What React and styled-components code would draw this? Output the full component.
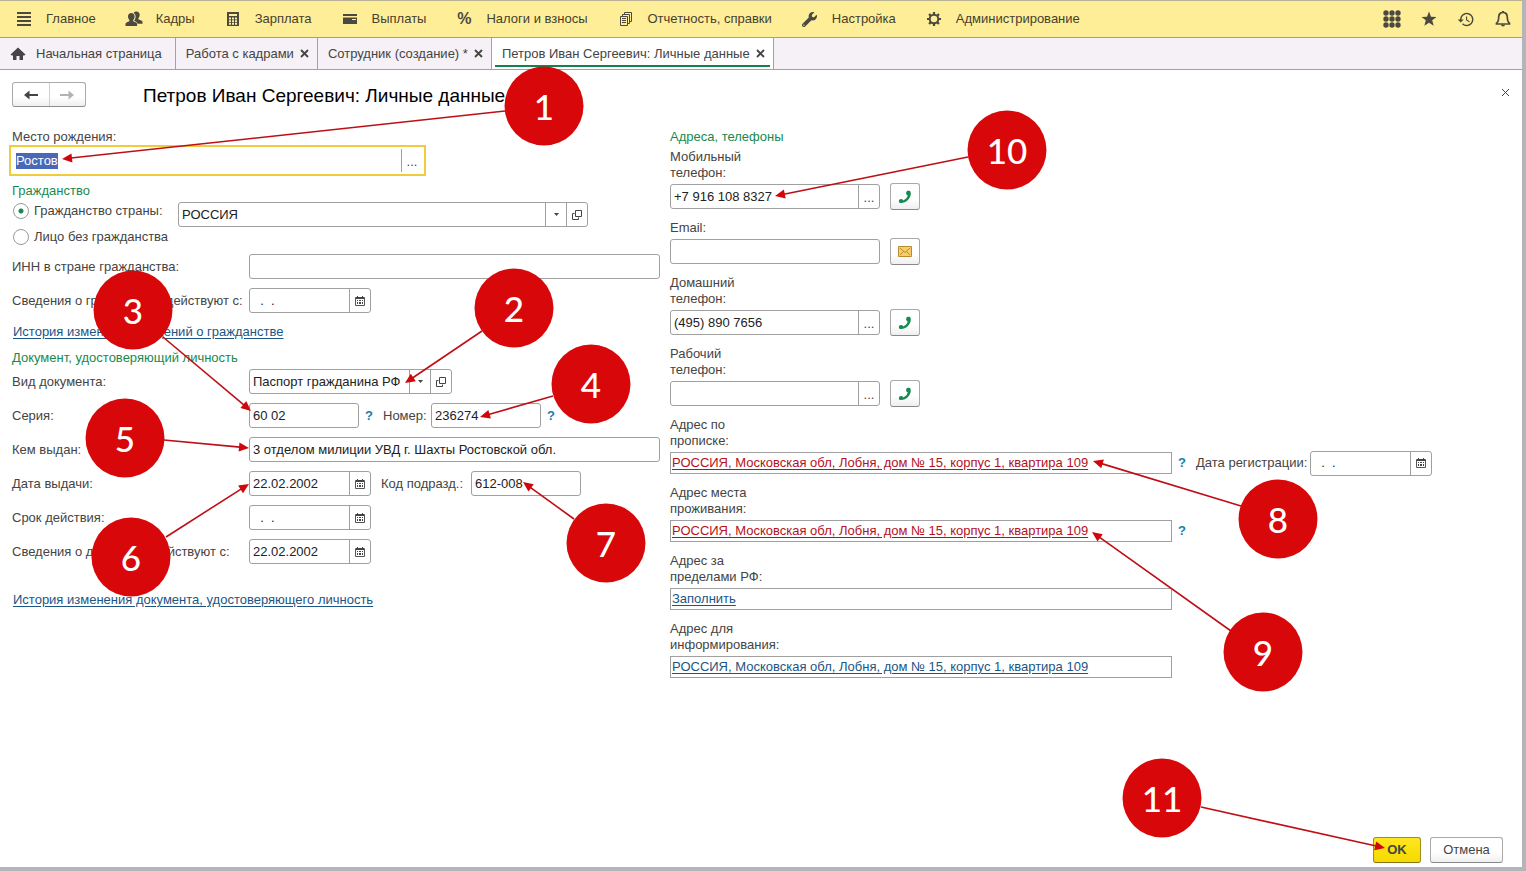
import { useEffect, useRef } from "react"
import styled, { createGlobalStyle } from "styled-components"
import { FaWrench } from "react-icons/fa"
import { MdHistory } from "react-icons/md"

const GlobalStyle = createGlobalStyle`
    * {
        box-sizing: border-box;
    }
    body {
        margin: 0;
        background-color: #b4b5b9;
    }
    body, input, select, button {
        font-family: "Liberation Sans", Arial, sans-serif;
        font-size: 13px;
        line-height: 16px;
        color: #444;
    }
`

const Window = styled.div`
    min-height: 100vh;
    display: flex;
    flex-direction: column;
    position: relative;
    border-top: 1px solid #b9b294;
    border-right: 4px solid #b4b5b9;
    border-bottom: 4px solid #b4b5b9;
    background-color: #fff;
`

const MenuBar = styled.nav`
    height: 37px;
    display: flex;
    align-items: center;
    justify-content: space-between;
    padding: 0 10px 0 16px;
    background-color: #feee98;
    border-bottom: 1px solid #b5a255;
`

const MenuList = styled.div`
    display: flex;
    align-items: center;
    gap: 30px;
`

const MenuItem = styled.a`
    display: flex;
    align-items: center;
    gap: 14px;
    color: #44422f;
    text-decoration: none;
    white-space: nowrap;
`

const IconSlot = styled.span`
    width: 16px;
    height: 16px;
    display: flex;
    align-items: center;
    justify-content: center;
    color: #4c4a40;
`

const Percent = styled.span`
    font-size: 16px;
    font-weight: bold;
`

const Tools = styled.div`
    display: flex;
    gap: 19px;
`

const ToolButton = styled.button`
    width: 18px;
    height: 20px;
    display: flex;
    align-items: center;
    justify-content: center;
    padding: 0;
    border: none;
    background: none;
    color: #4c4a40;
`

const TabBar = styled.div`
    height: 32px;
    display: flex;
    background-color: #f5f1f6;
    border-bottom: 1px solid #a3a1a6;
`

const Tab = styled.div`
    display: flex;
    align-items: center;
    gap: ${props => props.home ? "10px" : "6px"};
    padding: ${props => props.home ? "0 13px 0 10px" : "0 7px 0 10px"};
    border-right: 1px solid #a3a1a6;
    background-color: ${props => props.active ? "#fff" : "transparent"};
    position: relative;
    white-space: nowrap;

    &::after {
        content: "";
        display: ${props => props.active ? "block" : "none"};
        position: absolute;
        left: 3px;
        right: 3px;
        bottom: 2px;
        height: 2px;
        background-color: #15824e;
    }
`

const TabLink = styled.a`
    color: #444;
    text-decoration: none;
`

const CloseButton = styled.button`
    width: 10px;
    height: 20px;
    display: flex;
    align-items: center;
    justify-content: center;
    padding: 0;
    border: none;
    background: none;
`

const Content = styled.main`
    flex: 1;
    display: flex;
    flex-direction: column;
    padding: 12px 12px 4px;
`

const TitleBar = styled.header`
    display: flex;
    align-items: flex-start;
    height: 26px;
    margin-bottom: 21px;
`

const NavButtons = styled.div`
    display: flex;
    width: 74px;
    height: 25px;
    border: 1px solid #aaa;
    border-bottom-color: #8d8d8d;
    border-radius: 3px;
    background: linear-gradient(#fff 60%, #efefef);
`

const NavButton = styled.button`
    flex: 1;
    display: flex;
    align-items: center;
    justify-content: center;
    padding: 0;
    border: none;
    border-left: ${props => props.divided ? "1px solid #d0d0d0" : "none"};
    background: none;
`

const Title = styled.h1`
    flex: 1;
    margin: 0 0 0 57px;
    font-size: 19px;
    line-height: 28px;
    font-weight: normal;
    color: #000;
`

const Columns = styled.div`
    display: grid;
    grid-template-columns: 648px minmax(0, 1fr);
    column-gap: 10px;
`

const Column = styled.section`
    display: flex;
    flex-direction: column;
    min-width: 0;
`

const GroupTitle = styled.h2`
    margin: 0;
    font-size: 13px;
    line-height: 16px;
    font-weight: normal;
    color: #178a50;
`

const Rows = styled.div`
    display: flex;
    flex-direction: column;
    gap: 9px;
    margin-top: 3px;
`

const Row = styled.div`
    display: flex;
    align-items: center;
    height: 25px;
`

const Label = styled.label`
    width: ${props => props.wide ? "237px" : "auto"};
    flex-shrink: 0;
    white-space: nowrap;
`

const SideLabel = styled.label`
    width: ${props => props.width}px;
    flex-shrink: 0;
    white-space: nowrap;
`

const Field = styled.div`
    display: flex;
    align-items: stretch;
    width: ${props => props.width ? props.width + "px" : "auto"};
    flex: ${props => props.width ? "none" : "1"};
    height: 25px;
    border: 1px solid #a0a0a0;
    border-radius: 3px;
    background-color: #fff;
    overflow: hidden;
`

const FocusedField = styled.div`
    display: flex;
    width: 417px;
    height: 31px;
    margin: 0 0 7px -3px;
    padding: 2px;
    border: 2px solid #f0cc3c;
    background-color: #fff;
`

const Input = styled.input`
    flex: 1;
    width: 0;
    min-width: 0;
    padding: 0 3px;
    border: none;
    outline: none;
    background: none;
    color: #222;

    &::selection {
        background-color: #4a68b8;
        color: #fff;
    }
`

const SelectBox = styled.div`
    flex: 1;
    display: grid;
    min-width: 0;

    & > * {
        grid-area: 1 / 1;
    }
`

const Select = styled.select`
    appearance: none;
    width: 100%;
    padding: 0 21px 0 3px;
    border: none;
    outline: none;
    background: none;
    color: #222;
`

const Caret = styled.span`
    justify-self: end;
    width: 21px;
    display: flex;
    align-items: center;
    justify-content: center;
    border-left: 1px solid #a0a0a0;
    pointer-events: none;
`

const FieldButton = styled.button`
    width: 21px;
    flex-shrink: 0;
    display: flex;
    align-items: center;
    justify-content: center;
    padding: 0;
    border: none;
    border-left: 1px solid #a0a0a0;
    background: none;
`

const Dots = styled.span`
    padding-top: 2px;
    line-height: 12px;
`

const Citizenship = styled.div`
    display: flex;
    gap: 10px;
    margin: 3px 0 6px;
`

const Radios = styled.div`
    width: 156px;
    flex-shrink: 0;
    display: flex;
    flex-direction: column;
    gap: 10px;
    padding: 1px 0 0 1px;
`

const RadioLabel = styled.label`
    display: flex;
    align-items: center;
    gap: 5px;
    height: 16px;
    white-space: nowrap;
`

const Radio = styled.input`
    appearance: none;
    width: 16px;
    height: 16px;
    flex-shrink: 0;
    margin: 0;
    border: 1px solid #999;
    border-radius: 50%;
    background: #fff;

    &:checked {
        background: radial-gradient(circle, #178a50 0 2px, #fff 3px);
    }
`

const Link = styled.a`
    color: ${props => props.alert ? "#b5121b" : "#1c5584"};
    text-decoration: underline;
    text-underline-offset: 2px;
    white-space: nowrap;
`

const HistoryLink = styled(Link)`
    align-self: flex-start;
    margin: ${props => props.last ? "28px 0 0 1px" : "11px 0 10px 1px"};
`

const Help = styled.button`
    width: 8px;
    margin: 0 ${props => props.after || 0}px 0 6px;
    padding: 0;
    border: none;
    background: none;
    color: #1a7dab;
    font-weight: bold;
    text-align: center;
`

const Contacts = styled.div`
    display: flex;
    flex-direction: column;
    gap: 11px;
    margin-top: 4px;
`

const Contact = styled.div`
    display: flex;
    flex-direction: column;
    gap: 3px;
`

const ContactLabel = styled.label`
    width: 110px;
`

const ContactRow = styled.div`
    display: flex;
    align-items: center;
    height: ${props => props.address ? "22px" : "25px"};
`

const ActionButton = styled.button`
    width: 30px;
    height: 27px;
    display: flex;
    align-items: center;
    justify-content: center;
    margin-left: 10px;
    padding: 0;
    border: 1px solid #aaa;
    border-bottom-color: #888;
    border-radius: 3px;
    background: linear-gradient(#fff 60%, #efefef);
`

const AddressBox = styled.div`
    width: 502px;
    height: 22px;
    display: flex;
    align-items: center;
    padding: 0 1px;
    border: 1px solid #a0a0a0;
`

const Footer = styled.footer`
    display: flex;
    justify-content: flex-end;
    gap: 9px;
    margin-top: auto;
    padding-right: 7px;
`

const FooterButton = styled.button`
    width: ${props => props.primary ? "48px" : "73px"};
    height: 26px;
    padding: 0;
    border: 1px solid ${props => props.primary ? "#a08d20" : "#aaa"};
    border-bottom-color: ${props => props.primary ? "#857510" : "#888"};
    border-radius: 3px;
    background: ${props => props.primary ? "linear-gradient(#ffe71f, #f6d900)" : "linear-gradient(#fff 60%, #efefef)"};
    font-weight: ${props => props.primary ? "bold" : "normal"};
`

const Overlay = styled.svg`
    position: absolute;
    top: -1px;
    left: 0;
    width: 100%;
    height: 100%;
    overflow: visible;
    pointer-events: none;
    font-family: Lato, sans-serif;
    font-size: 35px;
    font-weight: 500;
`

const ListIcon = () => (
    <svg width="16" height="16" viewBox="0 0 16 16" fill="currentColor">
        <path d="M1 1h14v2H1zM1 5h14v2H1zM1 9h14v2H1zM1 13h14v2H1z" />
    </svg>
)

const PeopleIcon = () => (
    <svg width="18" height="16" viewBox="0 0 18 16" fill="currentColor" style={{ flexShrink: 0 }}>
        <path d="M11.5 0.500c2 0 3.200 1.400 3.200 3.300 0 1.500-.6 2.500-1.300 3.300v1.200l3.300 1.500c.6.3.8.8.8 1.500v1.500h-5c-.1-1.200-.8-1.800-1.800-2.300l-1.600-.8c1-1.200 1.500-2.500 1.500-4.200 0-1.600-.7-2.800-1.900-3.600.6-.9 1.600-1.400 2.800-1.400z" />
        <path d="M6.300 2c2 0 3.300 1.400 3.300 3.500 0 1.600-.6 2.700-1.400 3.500v1.300l2.900 1.300c.7.4 1 .9 1 1.700v1.700H.5v-1.700c0-.8.3-1.300 1-1.700l2.900-1.300V9C3.600 8.200 3 7.100 3 5.500 3 3.400 4.300 2 6.300 2z" />
    </svg>
)

const CalcIcon = () => (
    <svg width="14" height="16" viewBox="0 0 14 16">
        <path fill="currentColor" d="M1 1h12v14H1z" />
        <path fill="#feee98" d="M3 3h8v2H3zM3 6.500h2v2H3zM6 6.500h2v2H6zM9 6.500h2v2H9zM3 9.200h2v2H3zM6 9.200h2v2H6zM9 9.200h2v2H9zM3 12h2v1.700H3zM6 12h2v1.700H6zM9 12h2v1.700H9z" />
    </svg>
)

const WalletIcon = () => (
    <svg width="16" height="16" viewBox="0 0 16 16">
        <path fill="currentColor" d="M1 3h14v2H1zM1 6.500h14V13H1z" />
        <path fill="#feee98" d="M10 8h4v1h-4z" />
    </svg>
)

const ReportIcon = () => (
    <svg width="16" height="16" viewBox="0 0 16 16" fill="none" stroke="currentColor">
        <path d="M2.500 5.500h7v9h-7zM4.500 5V3.500h7v9H10M6.500 3V1.500h7v9H12M4 7.500h4M4 9.500h4M4 11.500h4" />
    </svg>
)

const GearIcon = () => (
    <svg width="16" height="16" viewBox="0 0 16 16" fill="none" stroke="currentColor">
        <circle cx="8" cy="8" r="4.300" strokeWidth="2" />
        <path strokeWidth="2.200" d="M8 1v2.500M8 12.500V15M1 8h2.500M12.500 8H15M3.050 3.050l1.800 1.800M11.150 11.150l1.800 1.800M3.050 12.950l1.800-1.800M11.150 4.850l1.800-1.800" />
    </svg>
)

const GridIcon = () => (
    <svg width="18" height="18" viewBox="0 0 18 18" fill="currentColor">
        {[3, 9, 15].map(y => [3, 9, 15].map(x => <circle key={x + "-" + y} cx={x} cy={y} r="2.700" />))}
    </svg>
)

const StarIcon = () => (
    <svg width="16" height="16" viewBox="0 0 16 16" fill="currentColor">
        <path d="M8 .5l2 5.200 5.500.200-4.300 3.400 1.500 5.500L8 11.700l-4.700 3.100 1.500-5.500L.5 5.900 6 5.700z" />
    </svg>
)

const BellIcon = () => (
    <svg width="16" height="18" viewBox="0 0 16 18" fill="none" stroke="currentColor" strokeWidth="1.700">
        <path d="M8 2.500c-2.800 0-4.300 2-4.300 4.500 0 3.500-.8 5.200-2.200 6.200v.8h13v-.8c-1.400-1-2.200-2.700-2.200-6.200 0-2.500-1.500-4.500-4.300-4.500z" />
        <path fill="currentColor" stroke="none" d="M7 1h2v2H7zM6 14.500h4c0 1.300-.8 2-2 2s-2-.7-2-2z" />
    </svg>
)

const HomeIcon = () => (
    <svg width="16" height="14" viewBox="0 0 16 14" fill="currentColor">
        <path d="M8 .5l7.500 7-1.200 1H13V13H9.500V9h-3v4H3V8.500H1.700L.5 7.500z" />
    </svg>
)

const CrossIcon = ({ thin }) => (
    <svg width="9" height="9" viewBox="0 0 9 9" stroke="#444" strokeWidth={thin ? 1 : 1.800}>
        <path d="M1 1l7 7M8 1l-7 7" />
    </svg>
)

const ArrowIcon = ({ forward }) => (
    <svg width="16" height="12" viewBox="0 0 16 12" fill={forward ? "#b3b3b3" : "#444"}>
        <path d={forward ? "M15 6l-5.500-4.500V5H1v2h8.500v3.500z" : "M1 6l5.500-4.500V5H15v2H6.500v3.500z"} />
    </svg>
)

const CaretIcon = () => (
    <svg width="5" height="3" viewBox="0 0 5 3" fill="#444">
        <path d="M0 0h5L2.500 3z" />
    </svg>
)

const OpenIcon = () => (
    <svg width="10" height="10" viewBox="0 0 10 10" fill="none" stroke="#444">
        <path d="M3.500.5h6v6h-6zM2.500 3.500h-2v6h6v-2" />
    </svg>
)

const CalendarIcon = () => (
    <svg width="10" height="10" viewBox="0 0 10 10">
        <path fill="none" stroke="#555" d="M.5 1.500h9v8h-9z" />
        <path fill="#444" d="M1 1h8v2H1zM2 0h1v2H2zM7 0h1v2H7zM2 4h1v1H2zM4 4h2v1H4zM7 4h1v1H7zM2 6h1v2H2zM4 6h2v2H4zM7 6h1v2H7z" />
    </svg>
)

const PhoneIcon = () => (
    <svg width="14" height="14" viewBox="0 0 14 14" fill="#178a50">
        <path d="M8.800 1.200C10 .4 12 .6 12.500 1.800c.9 2.600-.1 5.600-2.300 7.900C7.900 12 5 13.300 2.200 13 .9 12.800.4 11 1.300 9.700c1-1 2.800-.9 3.600.1l.2.700c1.200-.4 2.200-1.100 3-1.900.9-1 1.500-2.100 1.600-3.300l-.8-.4c-.9-.9-1.100-2.700-.1-3.700z" />
    </svg>
)

const MailIcon = () => (
    <svg width="14" height="11" viewBox="0 0 14 11" fill="none" stroke="#b98a30">
        <path fill="#f7cf6a" d="M.5.5h13v10H.5z" />
        <path d="M2 2l5 4.500L12 2M2 9l3.500-3.500M12 9L8.500 5.500" />
    </svg>
)

const menu = [
    { text: "Главное", icon: <ListIcon /> },
    { text: "Кадры", icon: <PeopleIcon /> },
    { text: "Зарплата", icon: <CalcIcon /> },
    { text: "Выплаты", icon: <WalletIcon /> },
    { text: "Налоги и взносы", icon: <Percent>%</Percent> },
    { text: "Отчетность, справки", icon: <ReportIcon /> },
    { text: "Настройка", icon: <FaWrench size={15} /> },
    { text: "Администрирование", icon: <GearIcon /> },
]

const tabs = ["Работа с кадрами", "Сотрудник (создание) *", "Петров Иван Сергеевич: Личные данные"]

const address = "РОССИЯ, Московская обл, Лобня, дом № 15, корпус 1, квартира 109"

// number, circle centre, arrow start, arrow tip
const callouts = [
    [1, 544, 106, 505, 111, 62, 159],
    [2, 514, 308, 482, 331, 405, 383],
    [3, 133, 310, 163, 337, 251, 411],
    [4, 591, 384, 553, 396, 480, 417],
    [5, 125, 438, 164, 440, 249, 448],
    [6, 131, 557, 166, 537, 249, 484],
    [7, 606, 543, 574, 519, 523, 482],
    [8, 1278, 519, 1241, 506, 1093, 461],
    [9, 1263, 652, 1231, 631, 1092, 532],
    [10, 1007, 150, 968, 157, 775, 196],
    [11, 1162, 798, 1201, 807, 1385, 848],
]

const DateField = ({ id, value }) => (
    <Field width={122}>
        <Input id={id} defaultValue={value || "  .  ."} />
        <FieldButton aria-label="Календарь"><CalendarIcon /></FieldButton>
    </Field>
)

const SelectField = ({ id, value, width, label }) => (
    <Field width={width}>
        <SelectBox>
            <Select id={id} aria-label={label}>
                <option>{value}</option>
            </Select>
            <Caret><CaretIcon /></Caret>
        </SelectBox>
        <FieldButton aria-label="Открыть"><OpenIcon /></FieldButton>
    </Field>
)

const ContactField = ({ id, label, value, mail }) => (
    <Contact>
        <ContactLabel htmlFor={id}>{label}</ContactLabel>
        <ContactRow>
            <Field width={210}>
                <Input id={id} defaultValue={value} />
                {!mail && <FieldButton aria-label="Выбрать"><Dots>...</Dots></FieldButton>}
            </Field>
            <ActionButton aria-label={mail ? "Написать" : "Позвонить"}>
                {mail ? <MailIcon /> : <PhoneIcon />}
            </ActionButton>
        </ContactRow>
    </Contact>
)

const AddressField = ({ id, label, text, alert, children }) => (
    <Contact>
        <ContactLabel as="span" id={id}>{label}</ContactLabel>
        <ContactRow address>
            <AddressBox>
                <Link href="#" alert={alert ? 1 : undefined} aria-describedby={id}>{text}</Link>
            </AddressBox>
            {children}
        </ContactRow>
    </Contact>
)

const Callout = ({ data }) => {
    const [number, cx, cy, x1, y1, x2, y2] = data
    const angle = Math.atan2(y2 - y1, x2 - x1)
    const baseX = x2 - Math.cos(angle) * 9
    const baseY = y2 - Math.sin(angle) * 9

    return (
        <g>
            <line x1={x1} y1={y1} x2={baseX} y2={baseY} stroke="#bd0f15" strokeWidth="1.600" />
            <path
                d="M0 0L-10 -4.500V4.500z"
                fill="#d0060b"
                transform={`translate(${x2} ${y2}) rotate(${angle * 180 / Math.PI})`}
            />
            <circle cx={cx} cy={cy} r="39.500" fill="#d80709" />
            <text x={cx} y={cy + 14} textAnchor="middle" fill="#fff">{number}</text>
        </g>
    )
}

const App = () => {
    const birthPlace = useRef(null)

    useEffect(() => {
        birthPlace.current.focus()
        birthPlace.current.select()
    }, [])

    return (
        <Window>
            <GlobalStyle />
            <MenuBar>
                <MenuList>
                    {menu.map(item => (
                        <MenuItem href="#" key={item.text}>
                            <IconSlot>{item.icon}</IconSlot>
                            {item.text}
                        </MenuItem>
                    ))}
                </MenuList>
                <Tools>
                    <ToolButton aria-label="Функции"><GridIcon /></ToolButton>
                    <ToolButton aria-label="Избранное"><StarIcon /></ToolButton>
                    <ToolButton aria-label="История"><MdHistory size={19} /></ToolButton>
                    <ToolButton aria-label="Оповещения"><BellIcon /></ToolButton>
                </Tools>
            </MenuBar>

            <TabBar>
                <Tab home>
                    <HomeIcon />
                    <TabLink href="#">Начальная страница</TabLink>
                </Tab>
                {tabs.map((tab, i) => (
                    <Tab key={tab} active={i === 2 ? 1 : undefined}>
                        <TabLink href="#">{tab}</TabLink>
                        <CloseButton aria-label="Закрыть"><CrossIcon /></CloseButton>
                    </Tab>
                ))}
            </TabBar>

            <Content>
                <TitleBar>
                    <NavButtons>
                        <NavButton aria-label="Назад"><ArrowIcon /></NavButton>
                        <NavButton divided aria-label="Вперед"><ArrowIcon forward /></NavButton>
                    </NavButtons>
                    <Title>Петров Иван Сергеевич: Личные данные</Title>
                    <CloseButton aria-label="Закрыть"><CrossIcon thin /></CloseButton>
                </TitleBar>

                <Columns>
                    <Column>
                        <Label htmlFor="birth">Место рождения:</Label>
                        <FocusedField>
                            <Input id="birth" ref={birthPlace} defaultValue="Ростов" />
                            <FieldButton aria-label="Выбрать"><Dots>...</Dots></FieldButton>
                        </FocusedField>

                        <GroupTitle>Гражданство</GroupTitle>
                        <Citizenship>
                            <Radios>
                                <RadioLabel>
                                    <Radio type="radio" name="citizenship" defaultChecked />
                                    Гражданство страны:
                                </RadioLabel>
                                <RadioLabel>
                                    <Radio type="radio" name="citizenship" />
                                    Лицо без гражданства
                                </RadioLabel>
                            </Radios>
                            <SelectField label="Страна" value="РОССИЯ" width={410} />
                        </Citizenship>
                        <Rows>
                            <Row>
                                <Label wide htmlFor="inn">ИНН в стране гражданства:</Label>
                                <Field><Input id="inn" /></Field>
                            </Row>
                            <Row>
                                <Label wide htmlFor="citizenFrom">Сведения о гражданстве действуют с:</Label>
                                <DateField id="citizenFrom" />
                            </Row>
                        </Rows>
                        <HistoryLink href="#">История изменения сведений о гражданстве</HistoryLink>

                        <GroupTitle>Документ, удостоверяющий личность</GroupTitle>
                        <Rows>
                            <Row>
                                <Label wide htmlFor="docType">Вид документа:</Label>
                                <SelectField id="docType" value="Паспорт гражданина РФ" width={203} />
                            </Row>
                            <Row>
                                <Label wide htmlFor="series">Серия:</Label>
                                <Field width={110}><Input id="series" defaultValue="60 02" /></Field>
                                <Help after={10}>?</Help>
                                <SideLabel width={48} htmlFor="number">Номер:</SideLabel>
                                <Field width={110}><Input id="number" defaultValue="236274" /></Field>
                                <Help>?</Help>
                            </Row>
                            <Row>
                                <Label wide htmlFor="issuer">Кем выдан:</Label>
                                <Field><Input id="issuer" defaultValue="3 отделом милиции УВД г. Шахты Ростовской обл." /></Field>
                            </Row>
                            <Row>
                                <Label wide htmlFor="issued">Дата выдачи:</Label>
                                <DateField id="issued" value="22.02.2002" />
                                <SideLabel as="span" width={10} />
                                <SideLabel width={90} htmlFor="code">Код подразд.:</SideLabel>
                                <Field width={110}><Input id="code" defaultValue="612-008" /></Field>
                            </Row>
                            <Row>
                                <Label wide htmlFor="validTo">Срок действия:</Label>
                                <DateField id="validTo" />
                            </Row>
                            <Row>
                                <Label wide htmlFor="docFrom">Сведения о документе действуют с:</Label>
                                <DateField id="docFrom" value="22.02.2002" />
                            </Row>
                        </Rows>
                        <HistoryLink last href="#">История изменения документа, удостоверяющего личность</HistoryLink>
                    </Column>

                    <Column>
                        <GroupTitle>Адреса, телефоны</GroupTitle>
                        <Contacts>
                            <ContactField id="mobile" label="Мобильный телефон:" value="+7 916 108 8327" />
                            <ContactField id="email" label="Email:" mail />
                            <ContactField id="home" label="Домашний телефон:" value="(495) 890 7656" />
                            <ContactField id="work" label="Рабочий телефон:" />
                            <AddressField id="registered" label="Адрес по прописке:" text={address} alert>
                                <Help after={10}>?</Help>
                                <SideLabel width={114} htmlFor="registeredOn">Дата регистрации:</SideLabel>
                                <DateField id="registeredOn" />
                            </AddressField>
                            <AddressField id="living" label="Адрес места проживания:" text={address} alert>
                                <Help>?</Help>
                            </AddressField>
                            <AddressField id="abroad" label="Адрес за пределами РФ:" text="Заполнить" />
                            <AddressField id="informing" label="Адрес для информирования:" text={address} />
                        </Contacts>
                    </Column>
                </Columns>

                <Footer>
                    <FooterButton primary>OK</FooterButton>
                    <FooterButton>Отмена</FooterButton>
                </Footer>
            </Content>

            <Overlay>
                {callouts.map(data => <Callout key={data[0]} data={data} />)}
            </Overlay>
        </Window>
    )
}

export default App
